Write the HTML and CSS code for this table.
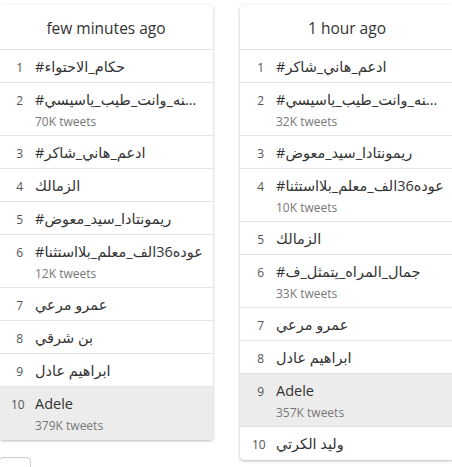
FILE: index.html
```html
<!DOCTYPE html>
<html lang="en">
<head>
<meta charset="utf-8">
<title>Trends</title>
<link rel="stylesheet" href="styles.css">
</head>
<body>
<div class="board">
  <div class="column">
    <section class="card">
      <header class="card-head">few minutes ago</header>
      <ol class="trends">
        <li class="trend"><span class="rank">1</span><div class="info"><div class="name">#حكام_الاحتواء</div></div></li>
        <li class="trend"><span class="rank">2</span><div class="info"><div class="name">#كل_سنه_وانت_طيب_ياسيسي</div><div class="count">70K tweets</div></div></li>
        <li class="trend"><span class="rank">3</span><div class="info"><div class="name">#ادعم_هاني_شاكر</div></div></li>
        <li class="trend"><span class="rank">4</span><div class="info"><div class="name">الزمالك</div></div></li>
        <li class="trend"><span class="rank">5</span><div class="info"><div class="name">#ريمونتادا_سيد_معوض</div></div></li>
        <li class="trend"><span class="rank">6</span><div class="info"><div class="name">#عوده36الف_معلم_بلااستثنا</div><div class="count">12K tweets</div></div></li>
        <li class="trend"><span class="rank">7</span><div class="info"><div class="name">عمرو مرعي</div></div></li>
        <li class="trend"><span class="rank">8</span><div class="info"><div class="name">بن شرقي</div></div></li>
        <li class="trend"><span class="rank">9</span><div class="info"><div class="name">ابراهيم عادل</div></div></li>
        <li class="trend is-active"><span class="rank">10</span><div class="info"><div class="name">Adele</div><div class="count">379K tweets</div></div></li>
      </ol>
    </section>
    <button class="more" type="button"></button>
  </div>
  <div class="column">
    <section class="card">
      <header class="card-head">1 hour ago</header>
      <ol class="trends">
        <li class="trend"><span class="rank">1</span><div class="info"><div class="name">#ادعم_هاني_شاكر</div></div></li>
        <li class="trend"><span class="rank">2</span><div class="info"><div class="name">#كل_سنه_وانت_طيب_ياسيسي</div><div class="count">32K tweets</div></div></li>
        <li class="trend"><span class="rank">3</span><div class="info"><div class="name">#ريمونتادا_سيد_معوض</div></div></li>
        <li class="trend"><span class="rank">4</span><div class="info"><div class="name">#عوده36الف_معلم_بلااستثنا</div><div class="count">10K tweets</div></div></li>
        <li class="trend"><span class="rank">5</span><div class="info"><div class="name">الزمالك</div></div></li>
        <li class="trend"><span class="rank">6</span><div class="info"><div class="name">#جمال_المراه_يتمثل_ف</div><div class="count">33K tweets</div></div></li>
        <li class="trend"><span class="rank">7</span><div class="info"><div class="name">عمرو مرعي</div></div></li>
        <li class="trend"><span class="rank">8</span><div class="info"><div class="name">ابراهيم عادل</div></div></li>
        <li class="trend is-active"><span class="rank">9</span><div class="info"><div class="name">Adele</div><div class="count">357K tweets</div></div></li>
        <li class="trend"><span class="rank">10</span><div class="info"><div class="name">وليد الكرتي</div></div></li>
      </ol>
    </section>
  </div>
</div>
</body>
</html>
```

FILE: styles.css
```css
html, body {
  margin: 0;
  padding: 0;
  background: #ffffff;
  overflow: hidden;
}

body {
  font-family: "Open Sans", "DejaVu Sans", sans-serif;
  color: #333333;
}

.board {
  display: flex;
  align-items: flex-start;
  gap: 27px;
  padding-top: 5px;
  margin-left: -1px;
}

.column {
  display: flex;
  flex-direction: column;
  width: 214px;
  flex: none;
}

.card {
  background: #ffffff;
  border-radius: 4px;
  box-shadow: 0 1px 3px rgba(0, 0, 0, 0.28);
  overflow: hidden;
}

.card-head {
  display: flex;
  align-items: center;
  justify-content: center;
  font-size: 15.5px;
  color: #333333;
  border-bottom: 1px solid #e3e3e3;
  padding-top: 1px;
  box-sizing: border-box;
  height: 45px;
}

.trends {
  list-style: none;
  margin: 0;
  padding: 0;
}

.trend {
  display: flex;
  align-items: baseline;
  padding: 7px 10px 5px 12px;
  border-bottom: 1px solid #e3e3e3;
}

.trend:last-child {
  border-bottom-color: transparent;
}

.trend.is-active {
  background: #ececec;
}

.rank {
  flex: none;
  width: 12px;
  text-align: right;
  font-size: 12px;
  line-height: 16px;
  color: #555555;
  margin-right: 12px;
}

.info {
  flex: 1;
  min-width: 0;
}

.name {
  font-size: 14.5px;
  line-height: 20px;
  height: 20px;
  white-space: nowrap;
  overflow: hidden;
  text-overflow: ellipsis;
  color: #333333;
}

.count {
  margin-top: 4px;
  margin-bottom: 0;
  font-size: 12px;
  line-height: 16px;
  color: #777777;
}

.more {
  margin-top: 17px;
  width: 32px;
  height: 30px;
  background: #ffffff;
  border: 1px solid #cccccc;
  border-radius: 4px;
  padding: 0;
}
```
